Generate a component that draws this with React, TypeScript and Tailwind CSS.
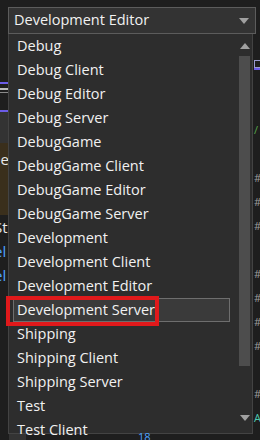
import React from 'react';

const configs = [
  'Debug',
  'Debug Client',
  'Debug Editor',
  'Debug Server',
  'DebugGame',
  'DebugGame Client',
  'DebugGame Editor',
  'DebugGame Server',
  'Development',
  'Development Client',
  'Development Editor',
  'Development Server',
  'Shipping',
  'Shipping Client',
  'Shipping Server',
  'Test',
  'Test Client',
];

const selected = 'Development Server';

// glyphs peeking out on the right edge of the editor, one per list row
const rightGlyphs = ['', '', '/', '', '#', '#', '#', '', '#', '#', '#', '#', '', '#', 'A'];

function Triangle({ up }: { up?: boolean }) {
  return (
    <svg width="10" height="6" viewBox="0 0 10 6">
      <path d={up ? 'M0 6 L5 0 L10 6 Z' : 'M0 0 L10 0 L5 6 Z'} fill="#a0a0a0" />
    </svg>
  );
}

export default function App() {
  return (
    <div
      className="w-[260px] h-[440px] overflow-hidden bg-[#1e1e1e] text-[#f1f1f1] flex flex-col pt-[7px]"
      style={{ fontFamily: '"Open Sans", "Noto Sans", sans-serif' }}
    >
      {/* combo box */}
      <div className="ml-[8px] w-[248px] h-[27px] shrink-0 bg-[#333333] border border-[#5c5c5c] flex items-center pl-[5px] pr-[6px]">
        <span className="flex-1 text-[14.5px] leading-none">Development Editor</span>
        <Triangle />
      </div>

      <div className="flex flex-1 min-h-0">
        {/* editor behind, left edge */}
        <div className="w-[8px] shrink-0 flex flex-col overflow-hidden text-[15px] leading-[24px]">
          <div className="h-[48px]" />
          <div className="h-[2px] bg-[#6b5ce7]" />
          <div className="h-[4px]" />
          <div className="h-[2px] bg-[#bdbdbd]" />
          <div className="h-[2px]" />
          <div className="h-[1px] bg-[#8a8a8a]" />
          <div className="h-[17px]" />
          <div className="h-[2px] bg-[#6b5ce7]" />
          <div className="h-[31px] bg-[#333]" />
          <div className="h-[72px] bg-[#3a2f1c] pt-[4px]">
            <div className="-ml-[8px] text-[#e8e8e8]">ee</div>
          </div>
          <div className="-ml-[6px] text-[#e8e8e8]">St</div>
          <div className="-ml-[6px] text-[#4da3ff]">el</div>
          <div className="-ml-[6px] text-[#4da3ff]">el</div>
        </div>

        {/* dropdown list */}
        <div className="w-[245px] h-[400px] shrink-0 bg-[#2d2d2d] border-l border-b border-r border-[#434343] flex">
          <div className="flex-1 flex flex-col">
            {configs.map((c) => (
              <div key={c} className="h-[24px] shrink-0 flex items-center">
                {c === selected ? (
                  <div className="relative ml-[4px] w-[217px] h-[24px] bg-[#3a3a3a] border border-[#6e6e6e] flex items-center pl-[3px] text-[14.5px]">
                    {c}
                    {/* red annotation */}
                    <div className="absolute left-[-8px] top-[-3px] w-[153px] h-[30px] border-[4px] border-[#e0191b]" />
                  </div>
                ) : (
                  <span className="pl-[8px] text-[14.5px]">{c}</span>
                )}
              </div>
            ))}
          </div>
          <div className="w-[13px] mr-[1px] flex flex-col items-center">
            <div className="h-[22px] flex items-center pt-[2px]">
              <Triangle up />
            </div>
            <div className="w-[11px] h-[310px] bg-[#4d4d4d]" />
            <div className="flex-1" />
            <div className="h-[18px] flex items-start">
              <Triangle />
            </div>
          </div>
        </div>

        {/* editor behind, right edge */}
        <div className="flex-1 flex flex-col overflow-hidden pl-[1px] text-[11px] leading-[24px]">
          <div className="h-[26px]" />
          <div className="w-[7px] h-[8px] border border-[#9a9ad0]" />
          <div className="h-[2px] bg-[#6b5ce7]" />
          {rightGlyphs.map((g, i) => (
            <div
              key={i}
              className={`h-[24px] shrink-0 ${g === '/' ? 'text-[#57a64a]' : g === 'A' ? 'text-[#4ec9b0]' : 'text-[#9b9b9b]'}`}
            >
              {g}
            </div>
          ))}
        </div>
      </div>

      {/* editor behind, bottom edge */}
      <div className="h-[6px] shrink-0 flex items-start text-[11px] leading-none">
        <div className="ml-[9px] w-[17px] h-[6px] bg-[#333]" />
        <div className="ml-[112px] -mt-[3px] text-[#4da3ff]">18</div>
      </div>
    </div>
  );
}
